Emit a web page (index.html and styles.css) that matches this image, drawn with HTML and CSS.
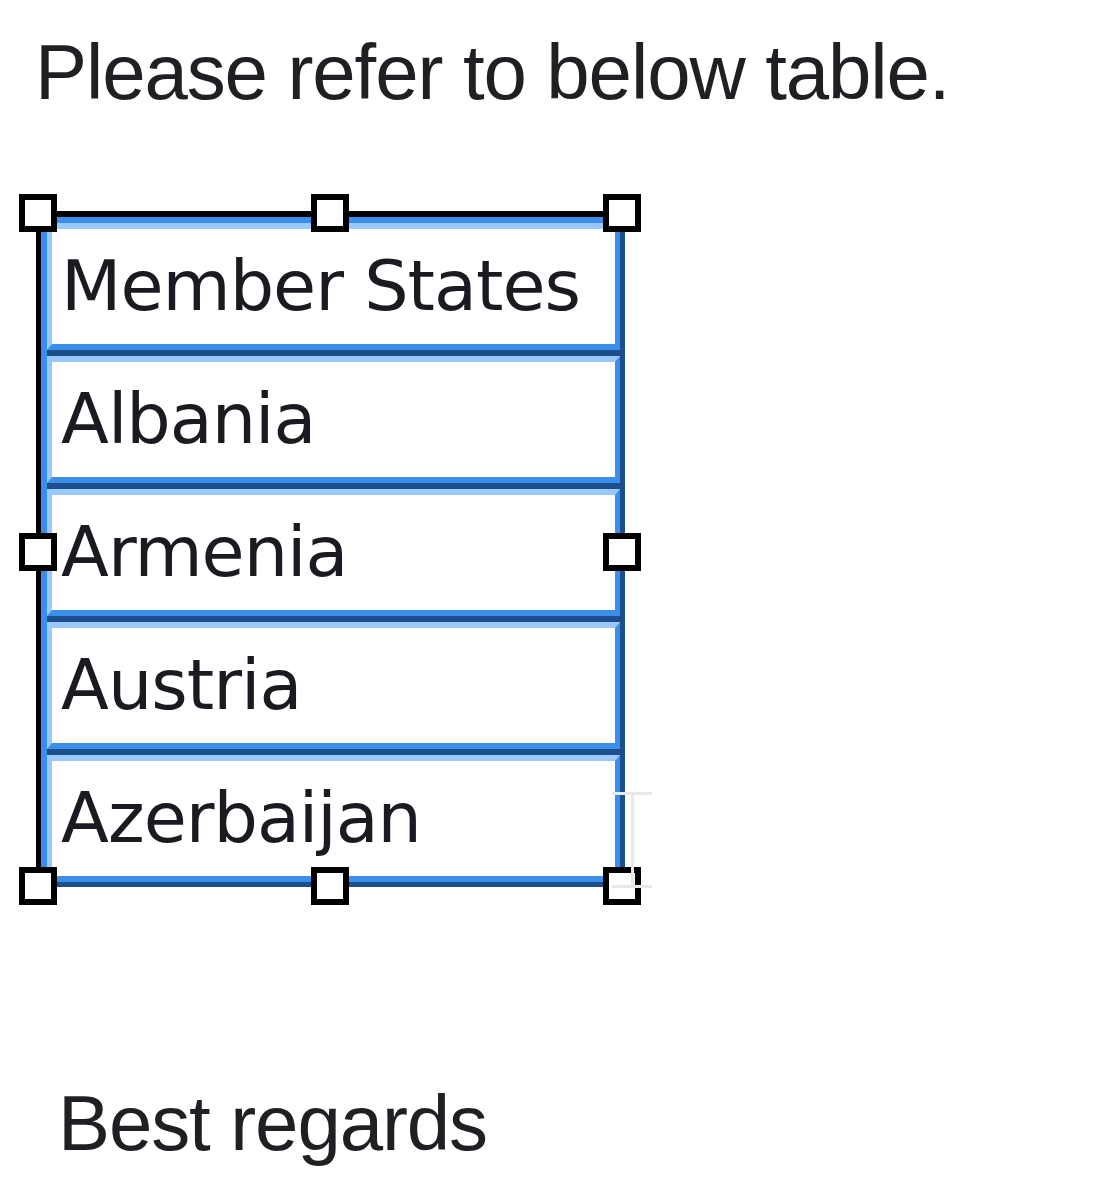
FILE: index.html
```html
<!DOCTYPE html>
<html>
<head>
<meta charset="utf-8">
<link rel="stylesheet" href="styles.css">
</head>
<body>
<div class="page">
  <p class="line intro">Please refer to below table.</p>
  <div class="frame">
    <div class="tbl">
      <div class="cell">Member States</div>
      <div class="cell">Albania</div>
      <div class="cell">Armenia</div>
      <div class="cell">Austria</div>
      <div class="cell">Azerbaijan</div>
    </div>
    <span class="handle h-tl"></span>
    <span class="handle h-tm"></span>
    <span class="handle h-tr"></span>
    <span class="handle h-ml"></span>
    <span class="handle h-mr"></span>
    <span class="handle h-bl"></span>
    <span class="handle h-bm"></span>
    <span class="handle h-br"></span>
    <span class="ibeam"><span class="ib-top"></span><span class="ib-stem"></span><span class="ib-bot"></span></span>
  </div>
  <p class="line regards">Best regards</p>
</div>
</body>
</html>
```
FILE: styles.css
```css
html, body {
  margin: 0;
  padding: 0;
  background: #ffffff;
}

.page {
  width: 1100px;
  height: 1200px;
  padding-top: 33px;
  box-sizing: border-box;
  position: relative;
}

.line {
  margin: 0;
  font-family: "Liberation Sans", Arial, sans-serif;
  font-size: 78px;
  line-height: 78px;
  letter-spacing: -1.1px;
  color: #1f1f24;
  white-space: nowrap;
}

.intro {
  padding-left: 35px;
}

.regards {
  margin-top: 197px;
  padding-left: 58px;
}

.frame {
  position: relative;
  margin-top: 100px;
  margin-left: 36px;
  width: 589px;
  border-top: 6px solid #000;
  border-left: 5px solid #000;
  box-sizing: border-box;
}

.tbl {
  display: flex;
  flex-direction: column;
  gap: 6px;
  background: #1c4e8c;
  border-top: 6px solid #3b8ee9;
  border-left: 6px solid #3b8ee9;
  border-right: 5px solid #1c4e8c;
  border-bottom: 5px solid #1c4e8c;
}

.cell {
  height: 127px;
  box-sizing: border-box;
  display: flex;
  align-items: center;
  padding-left: 9px;
  padding-bottom: 2px;
  background: #fff;
  border-top: 6px solid #9bc8fa;
  border-left: 5px solid #9bc8fa;
  border-right: 5px solid #3b8ee9;
  border-bottom: 6px solid #3b8ee9;
  font-family: "DejaVu Sans", Verdana, sans-serif;
  font-size: 70px;
  letter-spacing: -1px;
  color: #1a1a20;
  white-space: nowrap;
}

.handle {
  position: absolute;
  width: 38px;
  height: 38px;
  box-sizing: border-box;
  border: 6px solid #000;
  background: #fff;
}

.h-tl { left: -22px; top: -23px; }
.h-tm { left: 270px; top: -23px; }
.h-tr { left: 562px; top: -23px; }
.h-ml { left: -22px; top: 316px; }
.h-mr { left: 562px; top: 316px; }
.h-bl { left: -22px; top: 650px; }
.h-bm { left: 270px; top: 650px; }
.h-br { left: 562px; top: 650px; }

.ibeam {
  position: absolute;
  left: 571px;
  top: 575px;
  width: 40px;
  height: 96px;
}

.ib-top, .ib-bot {
  position: absolute;
  left: 0;
  width: 40px;
  height: 3px;
  background: #e6e8ec;
}

.ib-top { top: 0; }
.ib-bot { bottom: 0; }

.ib-stem {
  position: absolute;
  left: 19px;
  top: 0;
  width: 3px;
  height: 96px;
  background: #e6e8ec;
}
```
